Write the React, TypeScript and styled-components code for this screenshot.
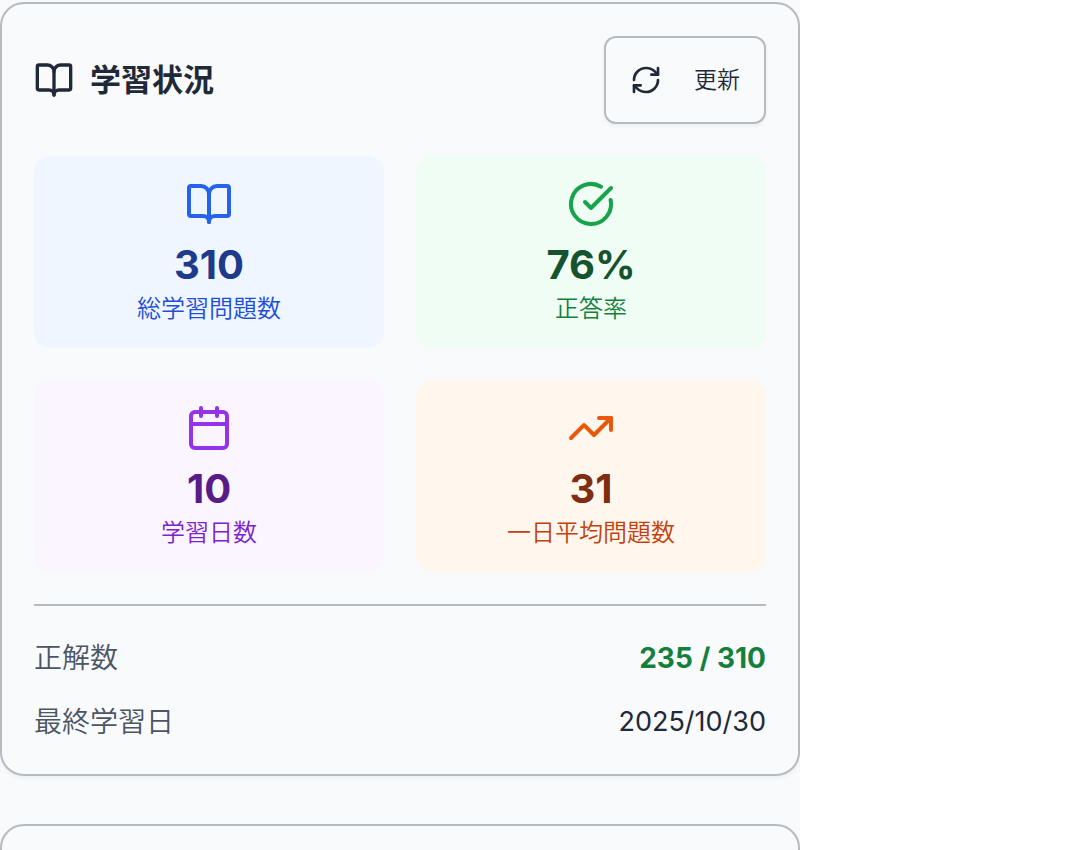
import React from "react";
import styled, { createGlobalStyle } from "styled-components";
import {
  BookOpen,
  Calendar,
  CircleCheckBig,
  RefreshCw,
  TrendingUp,
  type LucideIcon,
} from "lucide-react";

const GlobalStyle = createGlobalStyle`
  *, *::before, *::after { box-sizing: border-box; }
  body {
    margin: 0;
    background: #ffffff;
    color: #1f2937;
    font-family: Inter, "Noto Sans CJK JP", sans-serif;
    -webkit-font-smoothing: antialiased;
  }
  h2, p, dl, dd { margin: 0; }
`;

const Page = styled.main`
  display: flex;
  flex-direction: column;
  gap: 48px;
  width: 100%;
  max-width: 800px;
  height: 100vh;
  padding-top: 2px;
  overflow: hidden;
  background: #f9fafc;
`;

const Card = styled.section`
  display: flex;
  flex-direction: column;
  flex-shrink: 0;
  gap: 32px;
  padding: 32px;
  border: 2px solid #b4bbc1;
  border-radius: 24px;
  background: #f9fafc;
  box-shadow: 0 2px 4px rgba(0, 0, 0, 0.05);
`;

const CardHeader = styled.header`
  display: flex;
  align-items: center;
  justify-content: space-between;
`;

const Title = styled.h2`
  display: flex;
  align-items: center;
  gap: 16px;
  font-size: 31px;
  font-weight: 600;
  line-height: 42px;
`;

const RefreshButton = styled.button`
  display: flex;
  align-items: center;
  gap: 32px;
  height: 88px;
  padding: 0 24px;
  border: 2px solid #b4bbc1;
  border-radius: 12px;
  background: #f9fafc;
  box-shadow: 0 2px 4px rgba(0, 0, 0, 0.05);
  color: inherit;
  font-family: inherit;
  font-size: 23px;
  font-weight: 350;
  line-height: 32px;
  cursor: pointer;
`;

const StatGrid = styled.div`
  display: grid;
  grid-template-columns: repeat(2, 1fr);
  gap: 32px;
`;

const StatTile = styled.div<{ $bg: string }>`
  display: flex;
  flex-direction: column;
  align-items: center;
  padding: 24px;
  border-radius: 16px;
  background: ${(p) => p.$bg};
`;

const StatValue = styled.p<{ $color: string }>`
  margin-top: 8px;
  color: ${(p) => p.$color};
  font-size: 40px;
  font-weight: 700;
  line-height: 58px;
`;

const StatLabel = styled.p<{ $color: string }>`
  color: ${(p) => p.$color};
  font-size: 24px;
  font-weight: 350;
  line-height: 30px;
`;

const Details = styled.dl`
  display: flex;
  flex-direction: column;
  gap: 24px;
  padding-top: 32px;
  border-top: 2px solid #b4bbc1;
`;

const DetailRow = styled.div`
  display: flex;
  justify-content: space-between;
  font-size: 28px;
  line-height: 40px;
`;

const DetailTerm = styled.dt`
  color: #4b5563;
  font-weight: 350;
`;

const DetailValue = styled.dd<{ $strong?: boolean }>`
  color: ${(p) => (p.$strong ? "#15803d" : "#1f2937")};
  font-size: ${(p) => (p.$strong ? 28 : 27)}px;
  font-weight: ${(p) => (p.$strong ? 700 : 400)};
`;

interface Stat {
  icon: LucideIcon;
  value: string;
  label: string;
  bg: string;
  iconColor: string;
  valueColor: string;
  labelColor: string;
}

const stats: Stat[] = [
  { icon: BookOpen, value: "310", label: "総学習問題数", bg: "#eff6ff", iconColor: "#2563eb", valueColor: "#1e3a8a", labelColor: "#1d4ed8" },
  { icon: CircleCheckBig, value: "76%", label: "正答率", bg: "#f0fdf4", iconColor: "#16a34a", valueColor: "#14532d", labelColor: "#15803d" },
  { icon: Calendar, value: "10", label: "学習日数", bg: "#faf5ff", iconColor: "#9333ea", valueColor: "#581c87", labelColor: "#7e22ce" },
  { icon: TrendingUp, value: "31", label: "一日平均問題数", bg: "#fff7ed", iconColor: "#ea580c", valueColor: "#7c2d12", labelColor: "#c2410c" },
];

export default function App() {
  return (
    <>
      <GlobalStyle />
      <Page lang="ja">
        <Card>
          <CardHeader>
            <Title>
              <BookOpen size={40} aria-hidden />
              学習状況
            </Title>
            <RefreshButton type="button">
              <RefreshCw size={32} aria-hidden />
              更新
            </RefreshButton>
          </CardHeader>
          <StatGrid>
            {stats.map(({ icon: Icon, ...s }) => (
              <StatTile key={s.label} $bg={s.bg}>
                <Icon size={48} color={s.iconColor} aria-hidden />
                <StatValue $color={s.valueColor}>{s.value}</StatValue>
                <StatLabel $color={s.labelColor}>{s.label}</StatLabel>
              </StatTile>
            ))}
          </StatGrid>
          <Details>
            <DetailRow>
              <DetailTerm>正解数</DetailTerm>
              <DetailValue $strong>235 / 310</DetailValue>
            </DetailRow>
            <DetailRow>
              <DetailTerm>最終学習日</DetailTerm>
              <DetailValue>2025/10/30</DetailValue>
            </DetailRow>
          </Details>
        </Card>
        <Card />
      </Page>
    </>
  );
}
